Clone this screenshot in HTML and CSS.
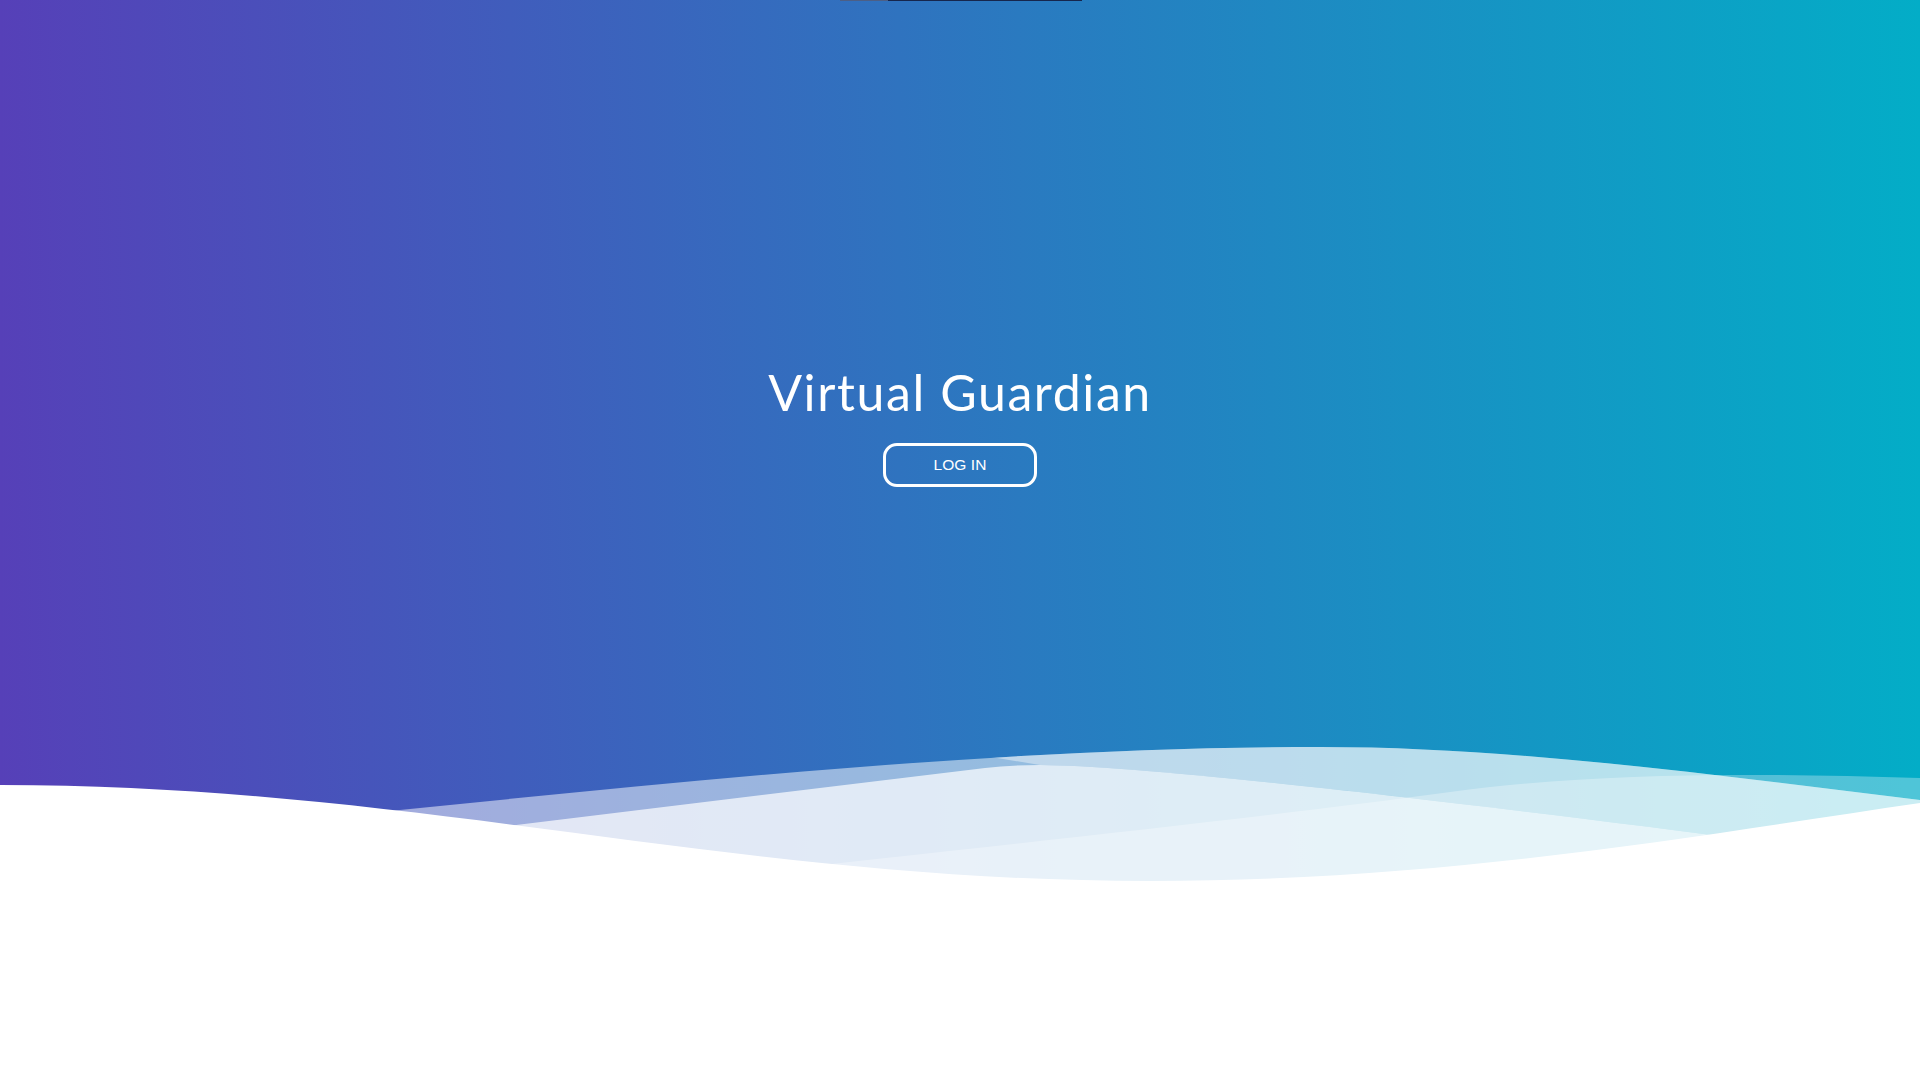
FILE: index.html
```html
<!DOCTYPE html>
<html lang="en">
<head>
<meta charset="utf-8">
<title>Virtual Guardian</title>
<link rel="stylesheet" href="styles.css">
</head>
<body>
<main class="hero">
  <svg class="waves" viewBox="0 0 1920 1080" preserveAspectRatio="none" aria-hidden="true">
    <defs>
      <clipPath id="bandClip">
        <path d="M985,0 L1920,0 L1920,862 C1450,800 1150,766 1040,765 L985,756 Z"/>
      </clipPath>
    </defs>
    <path fill="#fff" fill-opacity="0.5" d="M0,880 L390,811 C697,780 1010,747 1320,747 C1520,747 1720,776 1920,800 L1920,1080 L0,1080 Z"/>
    <path fill="#fff" fill-opacity="0.4" clip-path="url(#bandClip)" d="M0,880 L390,811 C697,780 1010,747 1320,747 C1520,747 1720,776 1920,800 L1920,1080 L0,1080 Z"/>
    <path fill="#fff" fill-opacity="0.7" d="M0,888 L507,826 L985,768 Q1010,765 1040,765 C1150,766 1450,800 1920,862 L1920,1080 L0,1080 Z"/>
    <path fill="#fff" fill-opacity="0.3" d="M0,960 L600,890 C800,866 1200,826 1450,792 C1600,772 1750,773 1920,778 L1920,1080 L0,1080 Z"/>
    <path fill="#fff" d="M0,785 C419,785 731,881 1150,881 C1450,881 1700,835 1920,803 L1920,1080 L0,1080 Z"/>
  </svg>
  <div class="topline"></div>
  <section class="content">
    <h1 class="title">Virtual Guardian</h1>
    <a class="login-btn" href="#">LOG IN</a>
  </section>
</main>
</body>
</html>
```
FILE: styles.css
```css
html, body {
  margin: 0;
  padding: 0;
  height: 100%;
  background: #ffffff;
}

.hero {
  position: relative;
  height: 1080px;
  overflow: hidden;
  background: linear-gradient(to right, #5640b8 0%, #03adc7 100%);
  display: flex;
  flex-direction: column;
  align-items: center;
}

.waves {
  position: absolute;
  inset: 0;
  width: 100%;
  height: 100%;
  z-index: 0;
}

.topline {
  position: relative;
  z-index: 1;
  width: 242px;
  height: 1px;
  margin-left: 1px;
  background: linear-gradient(to right, #4c5f86 0, #4c5f86 48px, #16264d 48px, #16264d 100%);
}

.content {
  position: relative;
  z-index: 1;
  padding-top: 361px;
  display: flex;
  flex-direction: column;
  align-items: center;
}

.title {
  margin: 0;
  font-family: Lato, "Open Sans", sans-serif;
  font-weight: 400;
  font-size: 50px;
  line-height: 60px;
  letter-spacing: 1.6px;
  color: #ffffff;
}

.login-btn {
  margin-top: 21px;
  box-sizing: border-box;
  width: 154px;
  height: 44px;
  border: 3px solid #ffffff;
  border-radius: 14px;
  display: flex;
  align-items: center;
  justify-content: center;
  padding-bottom: 1px;
  font-family: "Liberation Sans", Arial, sans-serif;
  font-size: 15.5px;
  color: #ffffff;
  text-decoration: none;
  letter-spacing: 0.1px;
}
```
